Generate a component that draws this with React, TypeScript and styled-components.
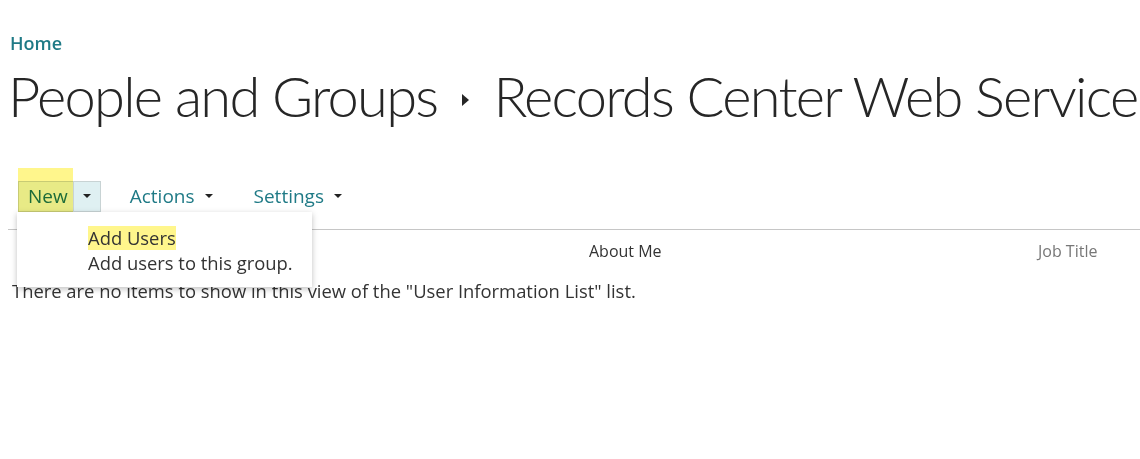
import React from "react";
import styled, { createGlobalStyle } from "styled-components";

const GlobalStyle = createGlobalStyle`
  body {
    margin: 0;
    background: #ffffff;
    font-family: "Open Sans", "Liberation Sans", sans-serif;
    color: #333;
  }
`;

const Page = styled.div`
  position: relative;
  width: 1140px;
  height: 459px;
  overflow: hidden;
  padding-top: 31px;
  box-sizing: border-box;
`;

const Breadcrumb = styled.a`
  display: block;
  margin-left: 10px;
  font-size: 18px;
  font-weight: 600;
  color: #1f7a86;
  text-decoration: none;
  line-height: 24px;
`;

const Title = styled.h1`
  display: flex;
  align-items: center;
  margin: 3px 0 0 8px;
  font-family: Lato, "Open Sans", sans-serif;
  font-size: 56px;
  font-weight: 300;
  letter-spacing: -1.7px;
  color: #262626;
  line-height: 76px;
  white-space: nowrap;
`;

const Arrow = styled.span`
  display: inline-block;
  margin: 8px 24px 0 25px;
  width: 0;
  height: 0;
  border-top: 6px solid transparent;
  border-bottom: 6px solid transparent;
  border-left: 7px solid #262626;
`;

const Toolbar = styled.div`
  display: flex;
  align-items: center;
  gap: 29px;
  margin: 46px 0 0 18px;
  height: 32px;
`;

const SplitButton = styled.div`
  position: relative;
  display: flex;
  height: 31px;
  border: 1px solid #c8d3d4;
  box-sizing: border-box;
`;

const NewPart = styled.span`
  display: flex;
  align-items: center;
  padding: 0 5px 0 9px;
  font-size: 19px;
  color: #1c6f66;
  background: #e8f3f4;
  border-right: 1px solid #c8d3d4;
`;

const CaretPart = styled.span`
  display: flex;
  align-items: center;
  justify-content: center;
  width: 26px;
  background: #dff0f2;
`;

const Caret = styled.span`
  display: inline-block;
  width: 0;
  height: 0;
  border-left: 4px solid transparent;
  border-right: 4px solid transparent;
  border-top: 4px solid #222;
`;

const ToolLink = styled.span`
  display: flex;
  align-items: center;
  gap: 10px;
  font-size: 19px;
  color: #1f7a86;
  padding-right: 12px;
`;

const Highlight = styled.span`
  position: absolute;
  left: -1px;
  top: -14px;
  width: 55px;
  height: 60px;
  background: #fff68c;
  mix-blend-mode: multiply;
  pointer-events: none;
`;

const Divider = styled.hr`
  margin: 17px 0 0 8px;
  border: none;
  border-top: 1px solid #c6c6c6;
`;

const HeaderRow = styled.div`
  display: grid;
  grid-template-columns: 581px 449px 1fr;
  margin-left: 8px;
  height: 44px;
  align-items: center;
  font-size: 16px;
`;

const ColHeader = styled.span<{ $muted?: boolean }>`
  color: ${(p) => (p.$muted ? "#777" : "#333")};
  margin-top: -2px;
`;

const EmptyText = styled.p`
  margin: 6px 0 0 12px;
  font-size: 18.4px;
  color: #333;
  line-height: 22px;
`;

const Menu = styled.div`
  position: absolute;
  left: 17px;
  top: 212px;
  width: 295px;
  height: 75px;
  background: #fff;
  box-shadow: 0 2px 6px rgba(0, 0, 0, 0.25);
  padding: 14px 0 0 71px;
  box-sizing: border-box;
`;

const MenuTitle = styled.div`
  display: inline-block;
  font-size: 18.4px;
  line-height: 24px;
  color: #333;
  background: #fff68c;
`;

const MenuDesc = styled.div`
  font-size: 18.4px;
  line-height: 26px;
  color: #333;
`;

export default function App() {
  return (
    <Page>
      <GlobalStyle />
      <Breadcrumb href="#">Home</Breadcrumb>
      <Title>
        People and Groups
        <Arrow />
        Records Center Web Service
      </Title>
      <Toolbar>
        <SplitButton>
          <NewPart>New</NewPart>
          <CaretPart>
            <Caret />
          </CaretPart>
          <Highlight />
        </SplitButton>
        <ToolLink>
          Actions <Caret />
        </ToolLink>
        <ToolLink>
          Settings <Caret />
        </ToolLink>
      </Toolbar>
      <Divider />
      <HeaderRow>
        <span />
        <ColHeader>About Me</ColHeader>
        <ColHeader $muted>Job Title</ColHeader>
      </HeaderRow>
      <EmptyText>
        There are no items to show in this view of the "User Information List" list.
      </EmptyText>
      <Menu>
        <MenuTitle>Add Users</MenuTitle>
        <MenuDesc>Add users to this group.</MenuDesc>
      </Menu>
    </Page>
  );
}
